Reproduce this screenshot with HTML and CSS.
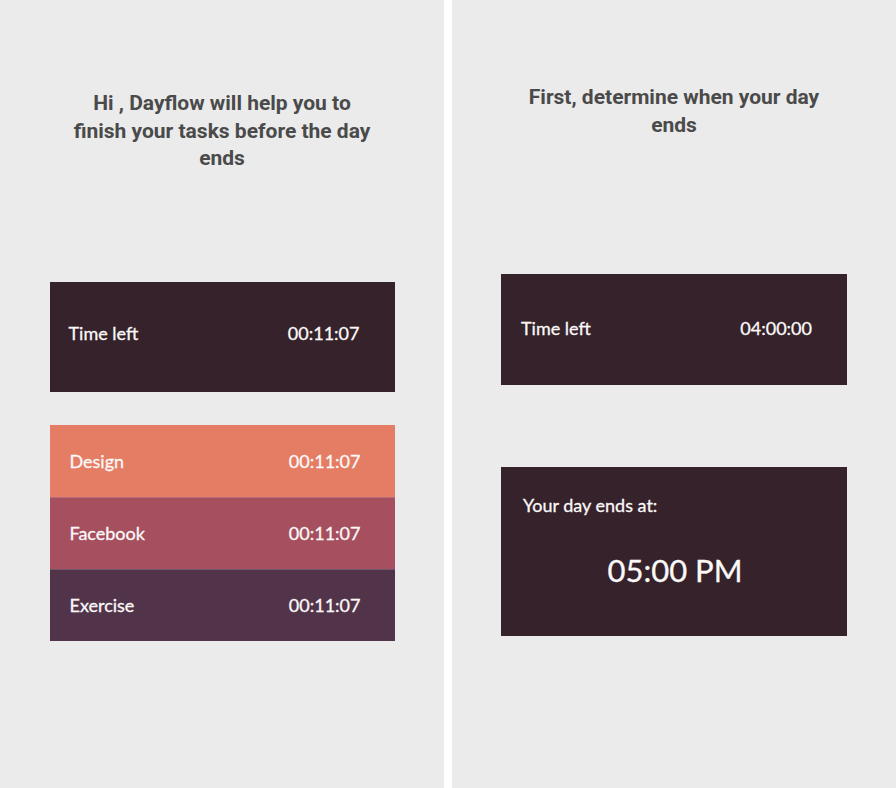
FILE: index.html
```html
<!DOCTYPE html>
<html lang="en">
<head>
<meta charset="utf-8">
<title>Dayflow</title>
<link rel="stylesheet" href="styles.css">
</head>
<body>
<div class="screens">
  <section class="panel panel-left">
    <h1 class="title title-left">Hi , Dayflow will help you to finish your tasks before the day ends</h1>
    <div class="card card-time">
      <span class="label">Time left</span>
      <span class="time">00:11:07</span>
    </div>
    <div class="tasks">
      <div class="task task-design"><span class="label">Design</span><span class="time">00:11:07</span></div>
      <div class="task task-facebook"><span class="label">Facebook</span><span class="time">00:11:07</span></div>
      <div class="task task-exercise"><span class="label">Exercise</span><span class="time">00:11:07</span></div>
    </div>
  </section>
  <div class="divider"></div>
  <section class="panel panel-right">
    <h1 class="title title-right">First, determine when your day ends</h1>
    <div class="card card-time card-time-right">
      <span class="label">Time left</span>
      <span class="time">04:00:00</span>
    </div>
    <div class="card card-end">
      <span class="end-label">Your day ends at:</span>
      <span class="end-time">05:00 PM</span>
    </div>
  </section>
</div>
</body>
</html>
```

FILE: styles.css
```css
html, body {
  margin: 0;
  padding: 0;
}
body {
  width: 896px;
  height: 788px;
  overflow: hidden;
  background: #ffffff;
}
.screens {
  display: flex;
  height: 788px;
}
.panel {
  width: 444px;
  height: 788px;
  background: #ebebeb;
  display: flex;
  flex-direction: column;
  align-items: center;
  box-sizing: border-box;
}
.divider {
  width: 8px;
  background: #ffffff;
}
.title {
  margin: 0;
  width: 305px;
  font-family: Roboto, "Liberation Sans", sans-serif;
  font-weight: 700;
  font-size: 21px;
  line-height: 27.5px;
  color: #4a4a4a;
  text-align: center;
}
.panel-left {
  padding-top: 90px;
}
.panel-right {
  padding-top: 84px;
}
.card, .task {
  width: 345px;
  box-sizing: border-box;
  display: flex;
  align-items: center;
  justify-content: space-between;
  font-family: Lato, "Open Sans", sans-serif;
  font-size: 18px;
  color: #fbf8f8;
  -webkit-text-stroke: 0.3px #fbf8f8;
}
.card-time {
  height: 110px;
  background: #35222a;
  padding: 0 35px 0 19px;
  margin-top: 109px;
}
.card-time .label, .card-time .time {
  position: relative;
  top: -4px;
}
.card-time-right {
  margin-top: 135px;
  height: 111px;
  width: 346px;
  padding-left: 20px;
}
.card-time-right .label, .card-time-right .time {
  top: -2px;
}
.tasks {
  margin-top: 33px;
  display: flex;
  flex-direction: column;
}
.task {
  height: 72px;
  padding: 0 34px 0 20px;
}
.task + .task {
  border-top: 1px solid rgba(255, 255, 255, 0.18);
}
.task-design {
  background: #e47d63;
}
.task-facebook {
  background: #a54f5f;
}
.task-exercise {
  background: #52344a;
}
.card-end {
  margin-top: 82px;
  width: 346px;
  height: 169px;
  background: #35222a;
  flex-direction: column;
  align-items: stretch;
  justify-content: flex-start;
  padding: 26px 22px 0 22px;
}
.end-label {
  font-size: 18px;
  line-height: 24px;
}
.end-time {
  margin-top: 33px;
  font-size: 31px;
  line-height: 40px;
  text-align: center;
  padding-left: 2px;
}
```
